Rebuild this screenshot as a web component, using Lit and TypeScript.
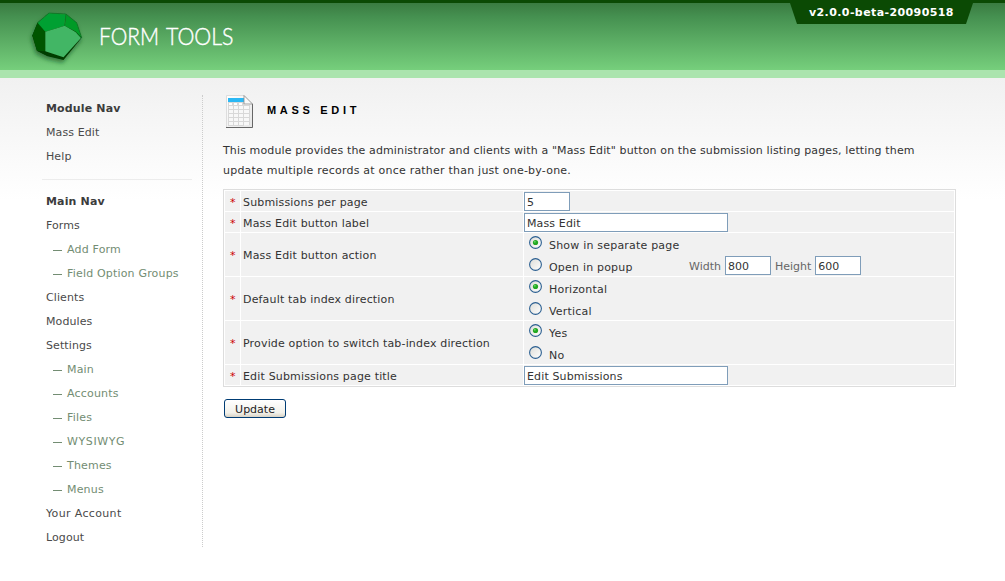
import { LitElement, html, css, svg } from "lit";
import { customElement } from "lit/decorators.js";

type NavItem = { label: string; sub?: boolean; loose?: boolean };

const NAV: NavItem[] = [
  { label: "Forms" },
  { label: "Add Form", sub: true },
  { label: "Field Option Groups", sub: true },
  { label: "Clients" },
  { label: "Modules" },
  { label: "Settings" },
  { label: "Main", sub: true },
  { label: "Accounts", sub: true },
  { label: "Files", sub: true },
  { label: "WYSIWYG", sub: true, loose: true },
  { label: "Themes", sub: true },
  { label: "Menus", sub: true },
  { label: "Your Account", loose: true },
  { label: "Logout" },
];

@customElement("app-root")
export class AppRoot extends LitElement {
  static styles = css`
    :host { display: block; height: 581px; overflow: hidden; box-sizing: border-box;
      font: 11px/20px Verdana, "DejaVu Sans", sans-serif; color: #333;
      background: linear-gradient(#f1f1f1 78px, #fff 200px) #fff; }
    * { box-sizing: border-box; }
    header { height: 78px; border-top: 3px solid #0b4a04; border-bottom: 8px solid #abe4ae;
      background: linear-gradient(#3a7b41, #459050 20%, #76cf7c); display: flex; justify-content: space-between; align-items: flex-start; }
    .brand { display: block; width: 260px; height: 67px; }
    .brand text { font: 300 23px Lato, sans-serif; fill: #fff; stroke: #fff; stroke-width: 0.4px; }
    .version { width: 183px; height: 21px; margin-right: 32px; background: #0b4a04; color: #fff; font-weight: bold;
      clip-path: polygon(0 0, 100% 0, 176px 100%, 7px 100%); padding-left: 19px; line-height: 19px; white-space: nowrap; letter-spacing: 0.4px; }
    .body { display: flex; padding-top: 17px; }
    nav { width: 161px; margin-left: 42px; height: 452px; padding-top: 2px;
      border-right: 1px dotted #ccc; color: #4a4a4a; line-height: 24px; letter-spacing: 0.1px; }
    .item { height: 24px; padding-left: 4px; white-space: nowrap; }
    .title { font-weight: bold; color: #3c3c3c; letter-spacing: 0.15px; }
    .sub { padding-left: 11px; color: #738d73; display: flex; align-items: center; letter-spacing: 0.18px; }
    .loose { letter-spacing: 0.35px; }
    .sub.loose { letter-spacing: 0.6px; }
    .dash { width: 9px; height: 1px; background: #738d73; margin-right: 5px; }
    .rule { width: 150px; height: 1px; background: #ececec; margin: 10px 0; }
    main { margin-left: 20px; width: 733px; }
    .head { display: flex; align-items: center; height: 34px; }
    h1 { margin: 0 0 0 11px; font: bold 11px/20px "Liberation Sans", Arial, sans-serif; letter-spacing: 3.7px; color: #000; padding-bottom: 4px; }
    p { margin: 12px 0 8px; white-space: nowrap; letter-spacing: 0.13px; }
    .wide { letter-spacing: 0.22px; }
    .table { border: 1px solid #ddd; padding: 1px; background: #fff; display: grid; gap: 1px; }
    .row { display: grid; grid-template-columns: 15px 282px 430px; gap: 1px; height: 20px; }
    .tall { height: 43px; }
    .cell { background: #f1f1f1; padding-left: 2px; white-space: nowrap; line-height: 23px; letter-spacing: 0.17px; height: 20px; }
    .tall .cell { height: 43px; line-height: 45px; }
    .cell.req { color: #c00; padding-left: 5px; }
    .input { height: 19px; width: 204px; border: 1px solid #7f9db9; background: #fff; padding-left: 2px; line-height: 19px; color: #333; }
    .cell.field { padding: 1px 0 0; letter-spacing: 0.13px; }
    .input.short { width: 46px; }
    .tall .cell.opts { padding: 0; overflow: hidden; letter-spacing: 0.2px; }
    .opt { display: flex; height: 22px; padding-left: 5px; line-height: 25px; }
    .radio { width: 13px; height: 13px; margin: 3px 7px 0 0; flex: none; }
    .popup { width: 140px; }
    .dim { color: #666; line-height: 24px; letter-spacing: 0; }
    .opt .input { margin: 1px 4px 0; letter-spacing: 0; }
    .button { width: 62px; height: 19px; margin: 12px 0 0 1px; border: 1px solid #003c74; border-radius: 3px;
      background: linear-gradient(#fff, #f2f1ea 75%, #d8d2c4); text-align: center; line-height: 19px; color: #222; }
  `;

  private radio(on: boolean) {
    return html`<svg class="radio" viewBox="0 0 13 13">
      <defs><linearGradient id="r" x2="1" y2="1"><stop stop-color="#dcdcd7" /><stop offset="1" stop-color="#fff" /></linearGradient></defs>
      <circle cx="6.5" cy="6.5" r="5.9" fill="url(#r)" stroke="#2b5f91" stroke-width="1.1" />
      ${on ? svg`<circle cx="6.5" cy="6.5" r="2.6" fill="#22a822" /><circle cx="5.8" cy="5.8" r="1" fill="#5fd45f" />` : ""}
    </svg>`;
  }

  private row(label: string, field: unknown, tall = false) {
    return html`<div class="row ${tall ? "tall" : ""}">
      <div class="cell req">*</div><div class="cell">${label}</div>
      <div class="cell field ${tall ? "opts" : ""}">${field}</div></div>`;
  }

  private opt(label: string, on: boolean) {
    return html`<div class="opt">${this.radio(on)}<span>${label}</span></div>`;
  }

  render() {
    return html`
      <header>
        <svg class="brand" viewBox="0 3 260 67">
          <defs><filter id="s" x="-30%" y="-30%" width="160%" height="160%"><feDropShadow dx="-1" dy="3" stdDeviation="2" flood-color="#164d1c" flood-opacity=".6" /></filter></defs>
          <g filter="url(#s)">
            <path d="M49 13L66 14L76.700 22.700L81.700 37.700L63.500 60L47.500 56.300L37 51L32.300 35.500L37.500 22.800Z" fill="#003c00" />
            <path d="M37.500 22.800L45.300 31.700V51.300L37 51L32.300 35.500Z" fill="#005400" />
            <path d="M49 13L66 14L64.700 25.700L45.300 31.700L37.500 22.800Z" fill="#06a030" />
            <path d="M66 14L76.700 22.700L81.700 37.700L75.500 31.500L64.700 25.700Z" fill="#049a28" />
            <path d="M45.300 31.700L64.700 25.700L75.500 32L81 38L63.500 57.200L45.300 51.300Z" fill="#43b665" />
            <path d="M49 13L66 14L76.700 22.700L81.700 37.700M66 14L64.700 25.700M49 13L37.500 22.800" fill="none" stroke="#12702a" stroke-width=".6" />
          </g>
          <text x="99" y="45" textLength="60" lengthAdjust="spacingAndGlyphs">FORM</text>
          <text x="166" y="45" textLength="67.500" lengthAdjust="spacingAndGlyphs">TOOLS</text>
        </svg>
        <div class="version">v2.0.0-beta-20090518</div>
      </header>
      <div class="body">
        <nav>
          <div class="item title">Module Nav</div>
          <div class="item">Mass Edit</div>
          <div class="item">Help</div>
          <div class="rule"></div>
          <div class="item title">Main Nav</div>
          ${NAV.map((n) => html`<div class="item ${n.sub ? "sub" : ""} ${n.loose ? "loose" : ""}">${n.sub ? html`<i class="dash"></i>` : ""}<span>${n.label}</span></div>`)}
        </nav>
        <main>
          <div class="head">
            <svg width="33" height="34" viewBox="0 0 33 34">
              <defs><linearGradient id="pg" x2="1" y2="1"><stop stop-color="#fff" /><stop offset="1" stop-color="#e6e6e6" /></linearGradient></defs>
              <path d="M3.500 .5H21L29.500 9V32.500H3.500Z" fill="url(#pg)" stroke="#ddd" />
              <path d="M3 32.500H29.500V9" fill="none" stroke="#666" />
              <path d="M5 3H21V31H5Z" fill="#d8d8d8" />
              <path d="M5 10H27V30H5Z" fill="#d8d8d8" />
              <path d="M6 8h3v2h-3zm5 0h3v2h-3zm5 0h3v2h-3zm5 0h5v2h-5z" fill="#fff" />
              ${[11, 15, 19, 23, 27].map((y) => svg`<path d="M6 ${y}h4v3h-4zM11 ${y}h4v3h-4zM16 ${y}h4v3h-4zM21 ${y}h5v3h-5z" fill="#f8f8f8" />`)}
              <path d="M5 3H21V7H5Z" fill="#2bb8f4" />
              <path d="M21 .5L29.500 9H21Z" fill="#fafafa" stroke="#8a8a8a" stroke-width=".8" />
            </svg>
            <h1>MASS EDIT</h1>
          </div>
          <p>This module provides the administrator and clients with a "Mass Edit" button on the submission listing pages, letting them<br /><span class="wide">update multiple records at once rather than just one-by-one.</span></p>
          <div class="table">
            ${this.row("Submissions per page", html`<div class="input short">5</div>`)}
            ${this.row("Mass Edit button label", html`<div class="input">Mass Edit</div>`)}
            ${this.row("Mass Edit button action", html`${this.opt("Show in separate page", true)}
              <div class="opt">${this.radio(false)}<span class="popup">Open in popup</span><span class="dim">Width</span><div class="input short">800</div><span class="dim">Height</span><div class="input short">600</div></div>`, true)}
            ${this.row("Default tab index direction", html`${this.opt("Horizontal", true)}${this.opt("Vertical", false)}`, true)}
            ${this.row("Provide option to switch tab-index direction", html`${this.opt("Yes", true)}${this.opt("No", false)}`, true)}
            ${this.row("Edit Submissions page title", html`<div class="input">Edit Submissions</div>`)}
          </div>
          <div class="button">Update</div>
        </main>
      </div>`;
  }
}
